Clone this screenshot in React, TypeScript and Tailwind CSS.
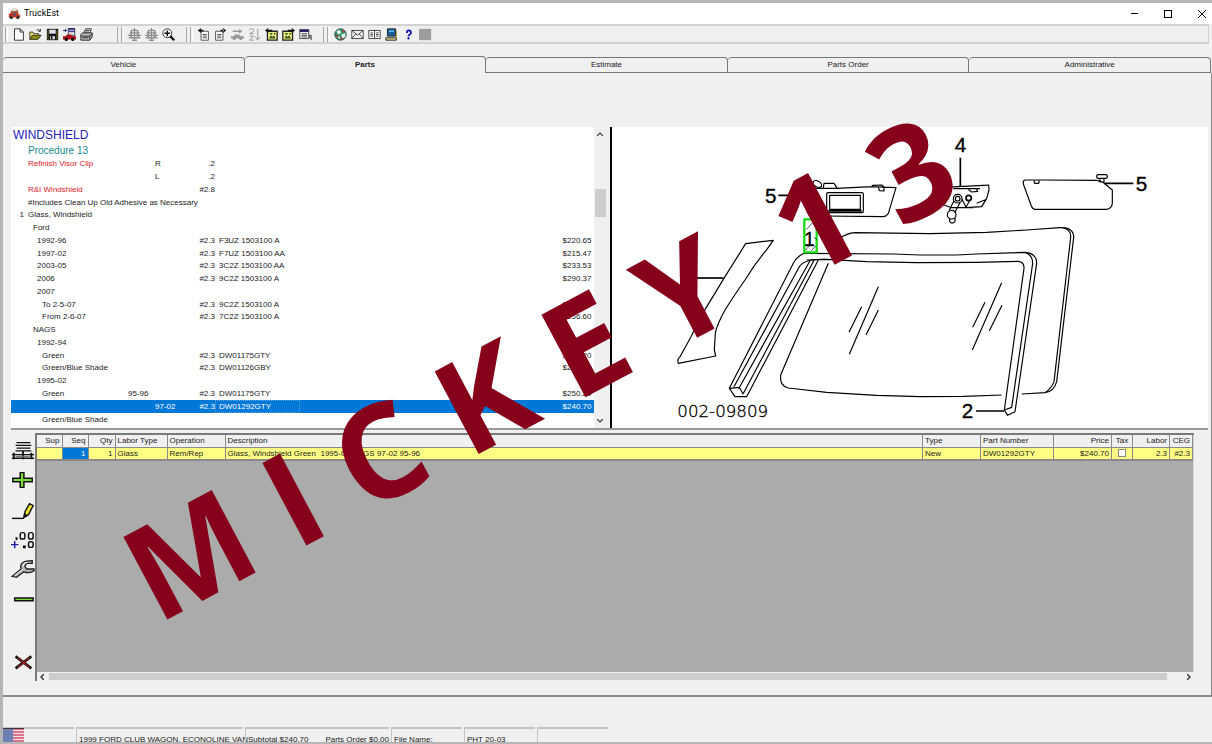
import { useState } from "react";
import type { ReactNode } from "react";
import clsx from "clsx";

type PartRow = {
  no?: string;
  text?: string;
  indent?: number;
  red?: boolean;
  yearA?: string;
  yearB?: string;
  labor?: string;
  part?: string;
  price?: string;
};

const partRows: PartRow[] = [
  { text: "Refinish Visor Clip", red: true, yearB: "R", labor: ".2" },
  { yearB: "L", labor: ".2" },
  { text: "R&I Windshield", red: true, labor: "#2.8" },
  { text: "#Includes Clean Up Old Adhesive as Necessary" },
  { no: "1", text: "Glass, Windshield" },
  { text: "Ford", indent: 1 },
  { text: "1992-96", indent: 2, labor: "#2.3", part: "F3UZ 1503100 A", price: "$220.65" },
  { text: "1997-02", indent: 2, labor: "#2.3", part: "F7UZ 1503100 AA", price: "$215.47" },
  { text: "2003-05", indent: 2, labor: "#2.3", part: "3C2Z 1503100 AA", price: "$233.53" },
  { text: "2006", indent: 2, labor: "#2.3", part: "9C2Z 1503100 A", price: "$290.37" },
  { text: "2007", indent: 2 },
  { text: "To 2-5-07", indent: 3, labor: "#2.3", part: "9C2Z 1503100 A", price: "$290.37" },
  { text: "From 2-6-07", indent: 3, labor: "#2.3", part: "7C2Z 1503100 A", price: "$256.60" },
  { text: "NAGS", indent: 1 },
  { text: "1992-94", indent: 2 },
  { text: "Green", indent: 3, labor: "#2.3", part: "DW01175GTY", price: "$250.20" },
  { text: "Green/Blue Shade", indent: 3, labor: "#2.3", part: "DW01126GBY", price: "$250.20" },
  { text: "1995-02", indent: 2 },
  { text: "Green", indent: 3, yearA: "95-96", labor: "#2.3", part: "DW01175GTY", price: "$250.20" },
  { yearB: "97-02", labor: "#2.3", part: "DW01292GTY", price: "$240.70" },
  { text: "Green/Blue Shade", indent: 3 },
];

const indents = ["pl-0", "pl-[5px]", "pl-[9px]", "pl-[14px]"];

const tabs = ["Vehicle", "Parts", "Estimate", "Parts Order", "Administrative"];

const icons: Record<string, ReactNode> = {
  new: <path d="M3 1h7l4 4v10H3zM10 1v4h4" fill="#fff" stroke="#111" />,
  open: (
    <g stroke="#222">
      <path d="M1 14V5h4l1 2h6v2" fill="#e8e070" />
      <path d="M1 14l3-5h11l-4 5z" fill="#8c8c10" />
      <path d="M9 3c2-2 4-1 5 1m0-3v3h-3" fill="none" />
    </g>
  ),
  save: (
    <g>
      <path d="M1 1h14v14H1z" fill="#111" />
      <path d="M4 2h8v5H4z" fill="#dde" />
      <path d="M2 2h1v12h-1zM13 3h1v11h-1z" fill="#7d8a28" />
      <path d="M5 10h6v4H5z" fill="#ddd" />
      <path d="M6 10h2v4H6z" fill="#111" />
    </g>
  ),
  carCopy: (
    <g>
      <path d="M6 0h9v10H6z" fill="#335" />
      <path d="M7 2h7v2H7z" fill="#99f" />
      <path d="M7 5h7v4H7z" fill="#ddd" />
      <path d="M0 3h5M3 1v4" stroke="#115" />
      <path d="M0 10h3l2-2h5l2 2h4v4H0z" fill="#a11" />
      <circle cx="4" cy="14" r="2" />
      <circle cx="12" cy="14" r="2" />
    </g>
  ),
  print: (
    <g stroke="#111">
      <path d="M4 7l3-6h7l-2 6z" fill="#fff" />
      <path d="M1 8l2-2h12v5l-3 4H1z" fill="#bbb" />
      <path d="M1 10h11l3-3M12 10v4M7 3h5M6 5h5M3 12h7" fill="none" />
    </g>
  ),
  scales: (
    <g stroke="#8c8c8c" fill="none">
      <path d="M8 0v14M4 3h8M2 6h12M0 9h16" strokeWidth="1.500" />
      <path d="M4 3v10M12 3v10M1 12h14M5 15h6" strokeWidth="2" />
    </g>
  ),
  zoomIn: (
    <g fill="none" stroke="#111">
      <circle cx="6.500" cy="6.500" r="5.500" fill="#fff" />
      <path d="M3 6.500h7M6.500 3v7" strokeWidth="1.800" />
      <path d="M10 10l5 5" strokeWidth="2.800" />
    </g>
  ),
  pageLeft: (
    <g>
      <path d="M5 4h9v11H5zM7 8h5M7 10h5M7 12h5" fill="#fff" stroke="#333" />
      <path d="M1 3l4-3v6zM4 2h4v2H4z" fill="#111" />
    </g>
  ),
  pageRight: (
    <g>
      <path d="M2 4h9v11H2zM4 8h5M4 10h5M4 12h5" fill="#fff" stroke="#333" />
      <path d="M15 3l-4-3v6zM8 2h4v2H8z" fill="#111" />
    </g>
  ),
  carGrey: (
    <g fill="#999">
      <path d="M2 3h8V1l4 3-4 3V5H2zM0 10h3l2-2h5l2 2h4v3H0z" />
      <circle cx="4" cy="13" r="2" />
      <circle cx="12" cy="13" r="2" />
    </g>
  ),
  sort: (
    <g fill="none" stroke="#999" strokeWidth="1.200">
      <path d="M2 3c0-3 5-3 5 0S2 6 2 7h5M2 10h5l-5 5h5M12 1v13M9 11l3 4 3-4" />
    </g>
  ),
  picLeft: (
    <g>
      <path d="M3 4h12v11H3z" fill="#f0f080" stroke="#222" strokeWidth="1.600" />
      <path d="M5 13l2-4 2 2 2-2 2 4zM6 6h3v2H6z" fill="#352" />
      <path d="M0 3l4-3v2h5v2H4v2z" fill="#111" />
      <circle cx="12" cy="7" r="1" />
    </g>
  ),
  picRight: (
    <g>
      <path d="M1 4h12v11H1z" fill="#f0f080" stroke="#222" strokeWidth="1.600" />
      <path d="M3 13l2-4 2 2 2-2 2 4zM4 6h3v2H4z" fill="#352" />
      <path d="M16 3l-4-3v2H7v2h5v2z" fill="#111" />
      <circle cx="10" cy="7" r="1" />
    </g>
  ),
  form: (
    <g>
      <path d="M1 2h11v11H1z" fill="#fff" stroke="#222" />
      <path d="M1 2h11v3H1z" fill="#226" />
      <path d="M3 7h7M3 9h7M3 11h7M13 9h2v3h-2zM15 12v3" fill="none" stroke="#222" />
    </g>
  ),
  globe: (
    <g>
      <circle cx="8" cy="8" r="7" fill="#2a9a70" stroke="#233" />
      <path d="M3 4l4-2 2 4-4 2zM9 8l5-2v5l-4 2zM4 11l3-1 1 4z" fill="#e4efe8" />
      <path d="M2 8l4 1-2 3zM10 2l3 2-3 2zM8 10l3 3-3 2z" fill="#b33" />
    </g>
  ),
  mail: <path d="M1 3h14v10H1zM1 3l7 6 7-6M1 13l5-6M15 13l-5-6" fill="#fff" stroke="#222" />,
  card: <path d="M1 3h14v10H1zM8 3v10M3 6h3M3 8h3M3 10h3M10 6h3M10 8h3M10 10h3" fill="#fff" stroke="#222" />,
  computer: (
    <g>
      <path d="M3 1h10v9H3z" fill="#1c5d9c" stroke="#111" />
      <path d="M5 3h6v2H5z" fill="#6bd" />
      <path d="M1 12h13v3H1z" fill="#d8cf8c" stroke="#111" />
      <path d="M14 3v9" stroke="#a90" />
    </g>
  ),
  help: (
    <path d="M6 6c0-4 5-4 5 0 0 2-3 2-3 4M8 11v3" fill="none" stroke="#1111b4" strokeWidth="2.200" />
  ),
  stop: <path d="M0 1h15v14H0z" fill="#9d9d9d" />,
};

const toolGroups = [
  ["new", "open", "save", "carCopy", "print"],
  ["scales", "scales", "zoomIn"],
  ["pageLeft", "pageRight", "carGrey", "sort", "picLeft", "picRight", "form"],
  ["globe", "mail", "card", "computer", "help", "stop"],
];

const toolGroupClasses = ["w-[116px]", "w-[69px]", "w-[137px]", "flex-1"];

const Grip = () => (
  <span className="mr-[2px] h-[15px] w-[3px] border-l border-r border-l-[#a8a8a8] border-r-white" />
);

const TitleBar = () => (
  <header className="flex h-[21px] shrink-0 items-center bg-white pl-[5px] pr-[3px]">
    <svg viewBox="0 0 16 16" className="h-[13px] w-[13px]">
      <path d="M2 9l3-6 4-2 3 3 1 5z" fill="#a65a42" />
      <path d="M5 2l5-1 1 4H5z" fill="#e8ded4" />
      <path d="M1 9l4-2h5l5 3v3H1z" fill="#c2361e" />
      <path d="M6 8h4v2H6z" fill="#3a5a9a" />
      <circle cx="4" cy="13" r="2" fill="#333" />
      <circle cx="12" cy="13" r="2" fill="#333" />
    </svg>
    <h1 className="ml-[3px] flex-1 font-[Roboto,sans-serif] text-[9px] text-black">TruckEst</h1>
    <div className="flex gap-[20px]">
      <button aria-label="Minimize" className="flex h-[14px] w-[14px] items-center justify-center">
        <span className="h-px w-[7px] bg-black" />
      </button>
      <button aria-label="Maximize" className="flex h-[14px] w-[14px] items-center justify-center">
        <span className="h-[8px] w-[8px] border border-black" />
      </button>
      <button aria-label="Close" className="flex h-[14px] w-[14px] items-center justify-center">
        <svg viewBox="0 0 8 8" className="h-[8px] w-[8px]" stroke="#000" strokeWidth="1">
          <path d="M0 0l8 8M8 0L0 8" />
        </svg>
      </button>
    </div>
  </header>
);

const Toolbar = () => (
  <div className="mr-[3px] flex h-[20px] shrink-0 items-center border-2 border-l-0 border-r border-[#d2d2d2] pl-[2px]">
    {toolGroups.map((group, i) => (
      <div key={i} className={clsx("flex items-center", toolGroupClasses[i])}>
        <Grip />
        {group.map((name, j) => (
          <button key={j} aria-label={name} className="flex w-[17px] justify-center">
            <svg viewBox="0 0 16 16" className="h-[13px] w-[13px]">
              {icons[name]}
            </svg>
          </button>
        ))}
        {i < 3 && <span className="ml-auto h-[15px] border-l border-[#a8a8a8] pr-[3px]" />}
      </div>
    ))}
  </div>
);

const PartsList = () => {
  const [selected, setSelected] = useState(19);

  return (
    <section className="flex w-1/2 min-w-0 bg-white">
      <div className="min-w-0 flex-1 overflow-hidden">
        <h2 className="pl-[2px] text-[12px] leading-[16px] text-[#2222c0]">WINDSHIELD</h2>
        <h3 className="pl-[17px] text-[10px] leading-[15px] text-[#20898c]">Procedure 13</h3>
        <table className="h-[268px] w-full table-fixed border-collapse">
          <colgroup>
            <col className="w-[17px]" />
            <col className="w-[100px]" />
            <col className="w-[27px]" />
            <col className="w-[30px]" />
            <col className="w-[30px]" />
            <col className="w-[85px]" />
            <col />
          </colgroup>
          <tbody>
            {partRows.map((row, i) => (
              <tr
                key={i}
                onClick={() => setSelected(i)}
                className={clsx(
                  "whitespace-nowrap leading-[12px]",
                  selected === i ? "bg-[#0078d7] text-white" : row.red ? "text-[#e0202a]" : "text-[#1c1c1c]"
                )}
              >
                <td className="p-0 pr-[4px] text-right">{row.no}</td>
                <td className={clsx("p-0", indents[row.indent ?? 0])}>{row.text}</td>
                <td className="p-0">{row.yearA}</td>
                <td className={clsx("p-0", selected !== i && "text-[#1c1c1c]")}>{row.yearB}</td>
                <td className={clsx("p-0 text-right", selected !== i && "text-[#1c1c1c]")}>{row.labor}</td>
                <td
                  className={clsx(
                    "p-0 pl-[4px]",
                    selected === i && "outline-dotted outline-1 -outline-offset-1 outline-[#5aa8e8]"
                  )}
                >
                  {row.part}
                </td>
                <td className="p-0 pr-[2px] text-right">{row.price}</td>
              </tr>
            ))}
          </tbody>
        </table>
      </div>
      <div className="flex w-[13px] flex-col items-center bg-[#f0f0f0]">
        <svg viewBox="0 0 6 4" className="mt-[5px] h-[4px] w-[6px]" fill="none" stroke="#333" strokeWidth="1.200">
          <path d="M0 4l3-3 3 3" />
        </svg>
        <span className="mt-[53px] h-[28px] w-[11px] bg-[#cdcdcd]" />
        <svg viewBox="0 0 6 4" className="mb-[5px] mt-auto h-[4px] w-[6px]" fill="none" stroke="#333" strokeWidth="1.200">
          <path d="M0 0l3 3 3-3" />
        </svg>
      </div>
      <div className="w-[3px] bg-[#f0f0f0]" />
    </section>
  );
};

const Diagram = () => (
  <section className="min-w-0 flex-1 bg-white">
    <svg viewBox="6 21 1785 903" preserveAspectRatio="xMinYMin meet" className="h-[301px] w-full">
      <g fill="none" stroke="#000" strokeWidth="3.500" strokeLinejoin="round">
        {/* pillar trim */}
        <path d="M407 371L490 361L468 392Q435 430 405 480Q370 530 345 570Q320 615 316 640L313 690L317 708L205 730Q200 720 210 710L243 650L280 577L345 470Z" />
        <path d="M255 474H340" strokeWidth="5" />
        {/* left molding */}
        <path d="M582 400Q560 410 550 430L358 805L375 830H410L625 420" />
        <path d="M650 418Q585 415 568 440L372 800" />
        <path d="M600 422L386 806M612 421L399 822M358 805L388 802L399 822" />
        {/* body opening */}
        <path d="M690 355Q710 340 735 338L960 341L1130 337L1250 330L1350 323Q1392 322 1391 352L1340 785Q1332 815 1305 818L1235 822" />
        <path d="M1360 323Q1384 330 1382 352L1332 785Q1325 805 1305 818" />
        {/* reveal molding */}
        <path d="M582 400L850 402L930 405L1040 405L1100 402L1245 397Q1280 400 1280 430L1215 875L1193 886L1183 870L1205 862L1268 430Q1268 405 1245 397" />
        <path d="M590 420L650 418L770 425L920 428L1100 427L1225 424Q1243 426 1242 445L1183 870" />
        {/* glass */}
        <path d="M655 430L512 765Q508 798 535 804L650 817L800 826L930 830L1060 829L1175 825" />
        <path d="M805 500L718 703M755 560L717 637M805 570L768 645M1175 488L1087 690M1125 547L1088 622M1176 556L1138 632" />
        {/* left visor */}
        <path d="M600 205L680 205L785 200L858 203L835 280Q830 290 818 290L640 288M640 203L642 190H672L682 205M785 200L788 196L815 195L822 201L822 213L808 212L805 201" />
        <ellipse cx="622" cy="192" rx="14" ry="9" transform="rotate(30 622 192)" />
        <rect x="650" y="218" width="110" height="60" rx="4" />
        <rect x="659" y="226" width="92" height="42" />
        <path d="M655 272H755" strokeWidth="6" />
        {/* inside mirror */}
        <path d="M1000 202L1120 196L1136 195L1137 210L1130 235L1115 260L1070 263M990 250L1020 262M1090 263H1020M1030 206H1110M1130 238L1100 250M1075 208L1085 216L1103 214L1098 205" />
        <circle cx="1043" cy="236" r="13" />
        <circle cx="1043" cy="236" r="7" />
        <path d="M1032 242L1018 270M1050 248L1034 278M1056 238L1068 262L1080 240" />
        <circle cx="1076" cy="234" r="8" strokeWidth="5" />
        <circle cx="1025" cy="284" r="13" />
        <path d="M1019 296V305Q1026 314 1035 304V294" />
        <path d="M1051 113V200" strokeWidth="5" />
        {/* right visor */}
        <path d="M1245 180H1300L1460 181L1478 186L1507 210V250Q1505 268 1487 268H1275Q1268 268 1264 258L1240 192Q1238 182 1245 180ZM1272 182L1274 190H1286L1288 182M1470 176V186H1482V176" />
        <rect x="1460" y="164" width="32" height="11" rx="5" />
        <path d="M1484 190H1570M1098 873H1183M505 226H560" strokeWidth="5" />
        {/* callout 1 hotspot */}
        <rect x="583" y="298" width="37" height="99" stroke="#18dc18" strokeWidth="7" />
        <path d="M586 390L600 376M604 392L617 378M610 305L590 328M612 352L622 360" strokeWidth="2" />
      </g>
      <g className="font-['Liberation_Sans',sans-serif] text-[62px]" stroke="#000" strokeWidth="1">
        <text x="465" y="250">5</text>
        <text x="1577" y="213">5</text>
        <text x="1034" y="97">4</text>
        <text x="1055" y="895">2</text>
        <text x="582" y="377" className="text-[58px]">1</text>
      </g>
      <text
        x="202"
        y="890"
        stroke="#000"
        strokeWidth="1"
        className="font-['DejaVu_Sans',sans-serif] text-[50px] font-extralight"
      >
        002-09809
      </text>
    </svg>
  </section>
);

const lineTools: { label: string; cls: string; icon: ReactNode }[] = [
  {
    label: "Lines",
    cls: "mt-[7px] h-[20px]",
    icon: (
      <g stroke="#111" strokeWidth="1.500">
        <path d="M6 2h15M5 5h17M6 8h15M5 11h17M1 15h24M1 19h24" />
        <path d="M3 13v7M13 11v9M22 13v7" strokeWidth="2" />
        <path d="M5 17h15" stroke="#777" />
      </g>
    ),
  },
  {
    label: "Add",
    cls: "mt-[10px] h-[20px]",
    icon: <path d="M10 2h4v6h9v4h-9v6h-4v-6H2V8h8z" fill="#80d838" stroke="#111" strokeWidth="1.600" />,
  },
  {
    label: "Edit",
    cls: "mt-[11px] h-[20px]",
    icon: (
      <g stroke="#111" strokeWidth="1.500">
        <path d="M1 18h13" />
        <path d="M14 17l1-6 5-9 4 2-5 10z" fill="#e8dc30" />
        <path d="M14 17l1-4 2 2z" fill="#111" />
      </g>
    ),
  },
  {
    label: "Decimals",
    cls: "mt-[9px] h-[20px]",
    icon: (
      <g>
        <path d="M0 15h8M4 11v8" stroke="#2020a0" strokeWidth="1.600" />
        <g fill="none" stroke="#111" strokeWidth="1.600">
          <rect x="10" y="2" width="5" height="7" rx="2" />
          <rect x="19" y="2" width="5" height="7" rx="2" />
          <rect x="19" y="12" width="5" height="6" rx="2" />
        </g>
        <path d="M5 7h2v3H5zM13 16h3v3h-3z" />
      </g>
    ),
  },
  {
    label: "Repair",
    cls: "mt-[9px] h-[20px]",
    icon: (
      <g>
        <path d="M1 18L11 10C9 4 13 1 23 1v3h-6l-2 3 2 3h8v2c-4 3-8 2-11 1l-8 6z" fill="#b8b8b8" stroke="#222" strokeWidth="1.400" />
        <path d="M4 17l9-7M13 7c0-3 2-4 5-4" stroke="#fff" fill="none" />
      </g>
    ),
  },
  {
    label: "Subtract",
    cls: "mt-[10px] h-[20px]",
    icon: <path d="M4 9h20v3H4z" fill="#80d838" stroke="#111" strokeWidth="1.600" />,
  },
  {
    label: "Delete",
    cls: "mt-[43px] h-[20px]",
    icon: (
      <g>
        <path d="M5 4l17 13M22 4L5 17" stroke="#111" strokeWidth="3" />
        <path d="M7 5l13 11M20 5L7 16" stroke="#a02020" strokeWidth="1.400" />
      </g>
    ),
  },
];

const LineTable = () => (
  <div className="flex min-w-0 flex-1 flex-col border-l-2 border-t-2 border-[#7a7a7a]">
    <div className="flex-1 border-r border-[#d8d8d8] bg-[#ababab]">
      <table className="w-full table-fixed border-collapse whitespace-nowrap border-b-2 border-[#8a8a8a] leading-[11px] text-[#1c1c1c]">
        <colgroup>
          <col className="w-[25px]" />
          <col className="w-[26px]" />
          <col className="w-[27px]" />
          <col className="w-[52px]" />
          <col className="w-[58px]" />
          <col />
          <col className="w-[58px]" />
          <col className="w-[73px]" />
          <col className="w-[58px]" />
          <col className="w-[21px]" />
          <col className="w-[37px]" />
          <col className="w-[23px]" />
        </colgroup>
        <thead>
          <tr className="h-[12px] bg-[#f0f0f0] text-left [&>th]:border-r [&>th]:border-[#8a8a8a] [&>th]:p-0 [&>th]:px-[2px] [&>th]:font-normal">
            <th className="text-right">Sup</th>
            <th className="text-right">Seq</th>
            <th className="text-right">Qty</th>
            <th>Labor Type</th>
            <th>Operation</th>
            <th>Description</th>
            <th>Type</th>
            <th>Part Number</th>
            <th className="text-right">Price</th>
            <th className="text-center">Tax</th>
            <th className="text-right">Labor</th>
            <th className="text-right">CEG</th>
          </tr>
        </thead>
        <tbody>
          <tr className="h-[12px] bg-[#ffff84] [&>td]:border-r [&>td]:border-t [&>td]:border-[#8a8a8a] [&>td]:p-0 [&>td]:px-[2px]">
            <td />
            <td className="bg-[#0078d7] text-right text-white">1</td>
            <td className="text-right">1</td>
            <td>Glass</td>
            <td>Rem/Rep</td>
            <td className="whitespace-pre">{"Glass, Windshield Green  1995-02 NAGS 97-02 95-96"}</td>
            <td>New</td>
            <td>DW01292GTY</td>
            <td className="text-right">$240.70</td>
            <td className="text-center">
              <input
                type="checkbox"
                aria-label="Tax"
                className="mx-auto block h-[8px] w-[8px] appearance-none border border-[#8a8a8a] bg-white checked:bg-[#0078d7]"
              />
            </td>
            <td className="text-right">2.3</td>
            <td className="text-right">#2.3</td>
          </tr>
        </tbody>
      </table>
    </div>
    <div className="flex h-[9px] items-center bg-[#f0f0f0] px-[3px]">
      <svg viewBox="0 0 4 6" className="h-[6px] w-[4px]" fill="none" stroke="#333" strokeWidth="1.400">
        <path d="M4 0L1 3l3 3" />
      </svg>
      <span className="ml-[5px] mr-[20px] h-[7px] flex-1 bg-[#cdcdcd]" />
      <svg viewBox="0 0 4 6" className="h-[6px] w-[4px]" fill="none" stroke="#333" strokeWidth="1.400">
        <path d="M0 0l3 3-3 3" />
      </svg>
    </div>
  </div>
);

const statusPane = "h-full shrink-0 whitespace-nowrap border-l border-t-2 border-[#c4c4c4] pl-[2px] pt-[6px]";

const StatusBar = () => (
  <footer className="flex h-[15px] shrink-0 gap-[2px] leading-[10px] text-[#1c1c1c]">
    <div className="h-full w-[71px] shrink-0 border-t-2 border-[#c4c4c4]">
      <svg viewBox="0 0 21 14" className="-mt-px h-[14px] w-[21px]">
        <path d="M0 0h21v14H0z" fill="#f3dfe4" />
        <path d="M0 1h21M0 4h21M0 7h21M0 10h21M0 13h21" stroke="#d4506c" strokeWidth="1.500" />
        <path d="M0 0h10v14H0z" fill="#6d80b4" />
        <path d="M0 0h21v1H0z" fill="#433" />
      </svg>
    </div>
    <div className={clsx(statusPane, "w-[167px]")}>1999 FORD CLUB WAGON, ECONOLINE VAN</div>
    <div className={clsx(statusPane, "flex w-[144px] justify-between")}>
      <span>Subtotal $240.70</span>
      <span>Parts Order $0.00</span>
    </div>
    <div className={clsx(statusPane, "w-[71px]")}>File Name:</div>
    <div className={clsx(statusPane, "w-[71px]")}>PHT 20-03</div>
    <div className={clsx(statusPane, "w-[71px]")} />
  </footer>
);

const Watermark = () => (
  <svg
    viewBox="3 3 1209 739"
    preserveAspectRatio="xMinYMin meet"
    className="pointer-events-none absolute inset-0 h-full w-full"
  >
    <g
      transform="translate(157 625) rotate(-28)"
      fill="#87001b"
      className="font-['Open_Sans',sans-serif] text-[131px] font-bold"
    >
      <text>M I C K E Y</text>
      <text x="733">1 3</text>
    </g>
  </svg>
);

const App = () => {
  const [tab, setTab] = useState("Parts");

  return (
    <main className="relative flex h-screen flex-col overflow-hidden border-b-2 border-l-[3px] border-t-[3px] border-[#b6b6b6] bg-[#f0f0f0] font-['Liberation_Sans',Arial,sans-serif] text-[8px]">
      <TitleBar />
      <Toolbar />
      <nav className="mr-px mt-[12px] flex h-[17px] shrink-0 items-end">
        {tabs.map((name) => (
          <button
            key={name}
            onClick={() => setTab(name)}
            className={clsx(
              "flex-1 rounded-t-[4px] border-r border-t border-[#777] text-[#1c1c1c]",
              tab === name ? "h-[17px] font-bold" : "h-[16px] border-b"
            )}
          >
            {name}
          </button>
        ))}
      </nav>
      <div className="flex min-h-0 flex-1 flex-col border-b-2 border-r border-[#8c8c8c] pb-[14px] pl-[8px] pr-[3px] pt-[54px]">
        <div className="flex h-[303px] shrink-0 border-b-2 border-[#999]">
          <PartsList />
          <div className="w-[2px] bg-black" />
          <Diagram />
        </div>
        <div className="mt-[3px] flex min-h-0 flex-1 pr-[14px]">
          <div className="flex w-[24px] shrink-0 flex-col">
            {lineTools.map((tool) => (
              <button key={tool.label} aria-label={tool.label} className={clsx("w-full shrink-0", tool.cls)}>
                <svg viewBox="0 0 26 20" className="h-full w-full">
                  {tool.icon}
                </svg>
              </button>
            ))}
          </div>
          <LineTable />
        </div>
      </div>
      <div className="h-[30px] shrink-0" />
      <StatusBar />
      <Watermark />
    </main>
  );
};

export default App;
